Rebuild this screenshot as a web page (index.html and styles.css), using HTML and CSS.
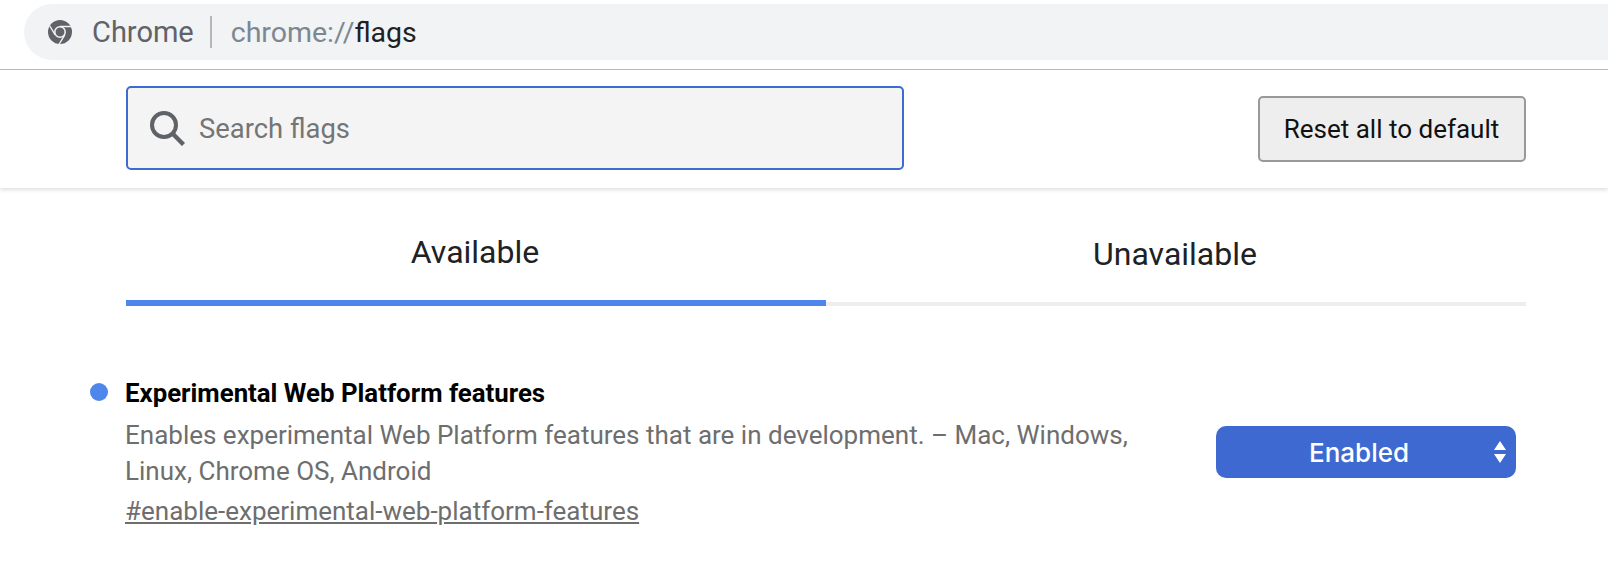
FILE: index.html
```html
<!DOCTYPE html>
<html lang="en">
<head>
<meta charset="utf-8">
<title>chrome://flags</title>
<link rel="stylesheet" href="styles.css">
</head>
<body>
<div class="toolbar">
  <div class="omnibox">
    <svg class="chrome-icon" width="24" height="24" viewBox="0 0 24 24">
      <circle cx="12" cy="12" r="12" fill="#5f6368"/>
      <circle cx="12" cy="12" r="5.2" fill="#5f6368" stroke="#f1f3f4" stroke-width="1.5"/>
      <path d="M12 6.500H23.500M7.200 14.800L1.500 5.500M16.800 14.800L11.200 24" stroke="#f1f3f4" stroke-width="1.400" fill="none"/>
    </svg>
    <span class="site">Chrome</span>
    <span class="sep"></span>
    <span class="url"><span class="scheme">chrome://</span>flags</span>
  </div>
</div>
<header class="head">
  <div class="search">
    <svg class="search-icon" width="36" height="36" viewBox="0 0 36 36">
      <circle cx="15" cy="15" r="12" fill="none" stroke="#5f6368" stroke-width="4"/>
      <path d="M23.500 23.500L34.500 34.500" stroke="#5f6368" stroke-width="4.400"/>
    </svg>
    <span class="placeholder">Search flags</span>
  </div>
  <button class="reset">Reset all to default</button>
</header>
<nav class="tabs">
  <div class="tab active">Available</div>
  <div class="tab">Unavailable</div>
</nav>
<section class="flag">
  <span class="dot"></span>
  <div class="info">
    <h2 class="title">Experimental Web Platform features</h2>
    <p class="desc">Enables experimental Web Platform features that are in development. – Mac, Windows, Linux, Chrome OS, Android</p>
    <a class="link" href="#enable-experimental-web-platform-features">#enable-experimental-web-platform-features</a>
  </div>
  <div class="select">
    <span class="select-label">Enabled</span>
    <svg class="arrows" width="12" height="22" viewBox="0 0 12 22">
      <path d="M6 0L12 9H0ZM6 22L0 13H12Z" fill="#fff"/>
    </svg>
  </div>
</section>
</body>
</html>
```
FILE: styles.css
```css
* { box-sizing: border-box; }
html, body { margin: 0; padding: 0; }
body {
  width: 1608px;
  height: 572px;
  overflow: hidden;
  background: #fff;
  font-family: Roboto, "Liberation Sans", sans-serif;
}
.toolbar {
  height: 70px;
  padding: 4px 0 0 24px;
  border-bottom: 1px solid #bcbcbc;
}
.omnibox {
  height: 56px;
  display: flex;
  align-items: center;
  background: #f1f3f4;
  border-radius: 28px 0 0 28px;
  padding-left: 24px;
}
.chrome-icon { flex: none; }
.site {
  margin-left: 20px;
  font-size: 29px;
  color: #5f6368;
}
.sep {
  width: 2px;
  height: 32px;
  margin: 0 19px 0 16px;
  background: #b5b7b9;
}
.url { font-size: 28.500px; color: #202124; }
.scheme { color: #7c8791; }
.head {
  height: 118px;
  padding: 16px 82px 0 126px;
  display: flex;
  justify-content: space-between;
  align-items: flex-start;
  box-shadow: 0 2px 4px rgba(0,0,0,.13);
}
.search {
  width: 778px;
  height: 84px;
  display: flex;
  align-items: center;
  padding-left: 21px;
  background: #f4f4f4;
  border: 2px solid #3d6bd0;
  border-radius: 5px;
}
.search-icon { flex: none; }
.placeholder {
  margin: 1px 0 0 14px;
  font-size: 27.400px;
  color: #757575;
}
.reset {
  width: 268px;
  height: 66px;
  margin-top: 10px;
  background: #eee;
  border: 2px solid #999;
  border-radius: 5px;
  font: 26px Roboto, sans-serif;
  color: #111;
  padding: 0 1px 0 0;
}
.tabs {
  display: flex;
  margin: 0 82px 0 126px;
  height: 118px;
}
.tab {
  flex: 1;
  height: 118px;
  padding: 46px 2px 0 0;
  text-align: center;
  font-size: 32px;
  line-height: 40px;
  color: #202124;
  border-bottom: 4px solid #eee;
}
.tab.active {
  padding-top: 44px;
  border-bottom: 6px solid #4f86ec;
}
.flag {
  display: flex;
  align-items: flex-start;
  padding: 71px 92px 0 90px;
}
.dot {
  width: 18px;
  height: 18px;
  margin-top: 6px;
  border-radius: 50%;
  background: #4f86ec;
  flex: none;
}
.info {
  width: 1030px;
  margin-left: 17px;
}
.title {
  margin: 0;
  font-size: 25.800px;
  line-height: 32px;
  font-weight: 700;
  color: #000;
}
.desc {
  margin: 8px 0 0;
  font-size: 26px;
  line-height: 36px;
  color: #6e6e6e;
}
.link {
  display: block;
  margin-top: 4px;
  font-size: 26px;
  line-height: 36px;
  color: #6e6e6e;
  text-decoration: underline;
}
.select {
  width: 300px;
  height: 52px;
  margin: 49px 0 0 63px;
  position: relative;
  display: flex;
  align-items: center;
  justify-content: center;
  padding-right: 14px;
  flex: none;
  background: #3e69d0;
  border-radius: 10px;
  color: #fff;
  font: 500 26px Inter, Roboto, sans-serif;
}
.arrows {
  position: absolute;
  right: 10px;
  top: 15px;
}
```
